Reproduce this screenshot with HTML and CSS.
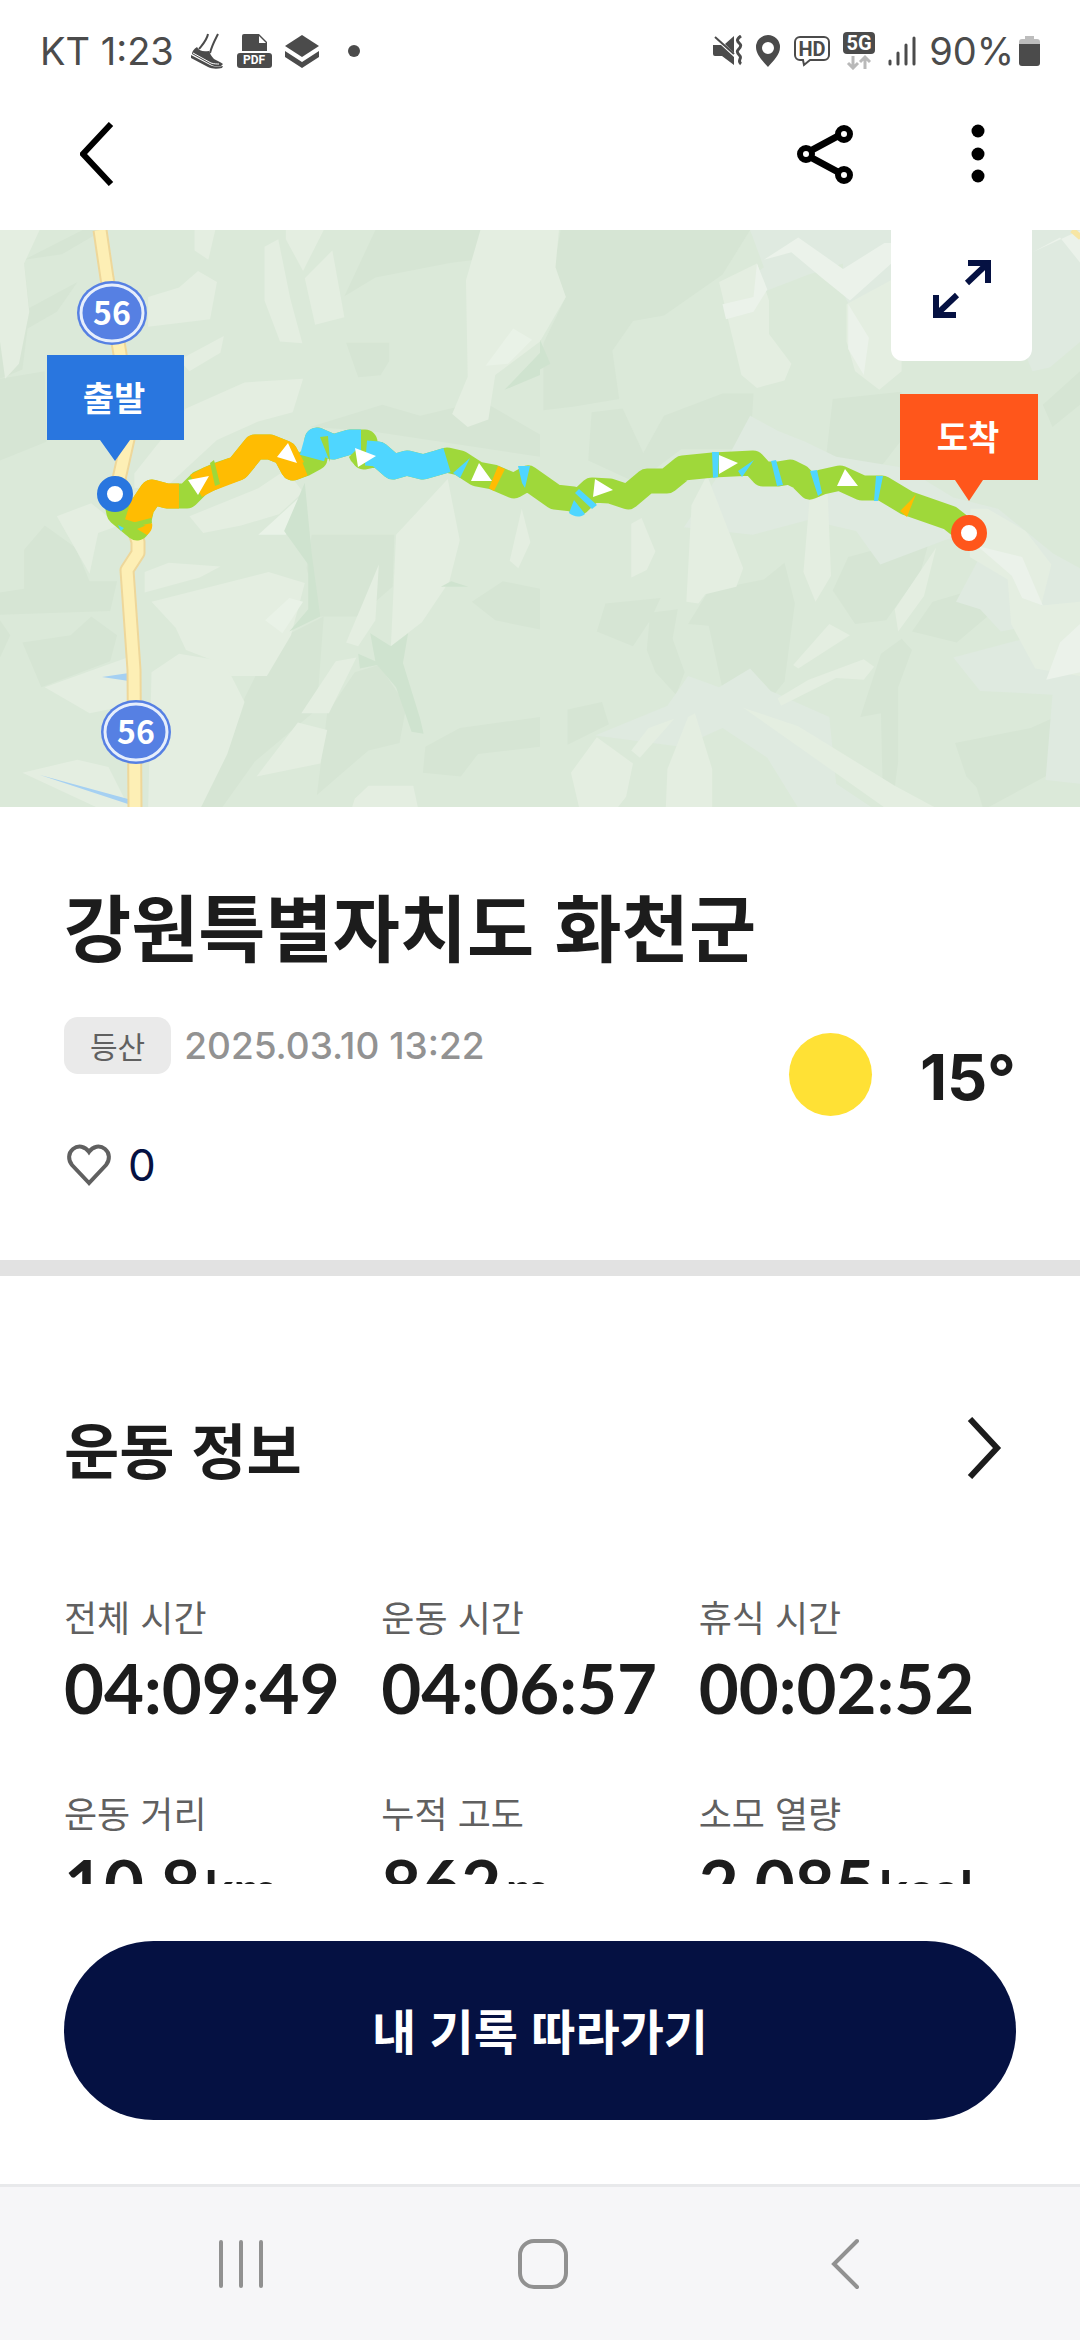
FILE: index.html
```html
<!DOCTYPE html>
<html lang="ko">
<head>
  <meta charset="UTF-8" />
  <meta name="viewport" content="width=device-width, initial-scale=1.0"/>
  <title>강원특별자치도 화천군</title>
  <link rel="stylesheet" href="styles.css">
</head>
<body>

  <!-- Status bar -->
  <div class="status-bar">
    <div class="status-left">
      <span class="status-text">KT 1:23</span>
      <svg width="33" height="36" viewBox="0 0 33 36" fill="#4b4b4b">
        <path d="M17 1c-1 6-5 10-9 15M27 1c-3 6-6 11-8 19" fill="none" stroke="#4b4b4b" stroke-width="2"/>
        <path d="M6 14c2 4 6 5 12 4 1 2 2 5 5 8 3 2 7 3 9 5l-2 2c-4 1-8 0-11-2L1 21c0-3 2-5 5-7z"/>
        <path d="M0 22l19 10c4 2 8 2 13 1l-1 2c-5 1-10 1-14-1L0 25z"/>
        <path d="M2 20l18 10c3 1 6 1 8 1" fill="none" stroke="#fff" stroke-width="1"/>
      </svg>
      <svg width="35" height="35" viewBox="0 0 35 35">
        <path d="M5 3a2 2 0 0 1 2-2h15l8 8v9H5z" fill="#4b4b4b"/>
        <path d="M22 3v7h7z" fill="#fff"/>
        <rect x="0" y="20" width="35" height="15" rx="3" fill="#4b4b4b"/>
        <text x="17" y="31" class="pdf-text">PDF</text>
      </svg>
      <svg width="34" height="34" viewBox="0 0 34 34" fill="#4b4b4b">
        <path d="M17 1l17 11-17 11L0 12z"/>
        <path d="M0 17l17 11 17-11v6L17 34 0 23z"/>
      </svg>
      <span class="status-dot"></span>
    </div>
    <div class="status-right">
      <svg width="30" height="31" viewBox="0 0 30 31">
        <path d="M0 10h8l13 12v8l-12-9H2a2 2 0 0 1-2-2zM21 1v17l-9-9z" fill="#4b4b4b"/>
        <path d="M2 2l19 17" stroke="#4b4b4b" stroke-width="2"/>
        <path d="M28 1c-6 4-3 6-1 8s0 4-2 6 0 4 2 6-3 5 1 8" fill="none" stroke="#4b4b4b" stroke-width="3"/>
      </svg>
      <svg width="25" height="32" viewBox="0 0 25 32">
        <path d="M12 0a12 12 0 0 1 12 12c0 8-7 14-12 20C7 26 0 20 0 12A12 12 0 0 1 12 0zm0 7a6 6 0 1 0 0 12 6 6 0 0 0 0-12z" fill="#4b4b4b"/>
      </svg>
      <svg width="36" height="32" viewBox="0 0 36 32">
        <path d="M6 2h24a5 5 0 0 1 5 5v13a5 5 0 0 1-5 5H16l-6 5-1-5H6a5 5 0 0 1-5-5V7a5 5 0 0 1 5-5z" fill="none" stroke="#4b4b4b" stroke-width="2"/>
        <text x="18" y="21" class="hd-text">HD</text>
      </svg>
      <svg width="32" height="38" viewBox="0 0 32 38">
        <rect x="0" y="0" width="32" height="22" rx="4" fill="#4b4b4b"/>
        <text x="16" y="18" class="net-text">5G</text>
        <path d="M10 24v12m-5-5l5 5 5-5M22 37V25m-5 5l5-5 5 5" fill="none" stroke="#b9b9b9" stroke-width="3"/>
      </svg>
      <svg width="28" height="32" viewBox="0 0 28 32" stroke="#4b4b4b" stroke-width="3" stroke-linecap="round">
        <path d="M2 26v3M10 18v11M18 10v19M26 3v26"/>
      </svg>
      <span class="status-text">90%</span>
      <svg class="battery" width="21" height="30" viewBox="0 0 21 30">
        <path d="M6 0h9v3h3a3 3 0 0 1 3 3v3H0V6a3 3 0 0 1 3-3h3z" fill="#bdbdbd"/>
        <path d="M0 8h21v19a3 3 0 0 1-3 3H3a3 3 0 0 1-3-3z" fill="#4b4b4b"/>
      </svg>
    </div>
  </div>

  <!-- App bar -->
  <header class="app-bar">
    <button class="icon-btn" aria-label="뒤로">
      <svg width="34" height="64" viewBox="0 0 34 64"><path d="M31 2L3 32l28 30" fill="none" stroke="#000" stroke-width="6"/></svg>
    </button>
    <div class="app-actions">
      <button class="icon-btn" aria-label="공유">
        <svg width="58" height="62" viewBox="0 0 58 62" fill="none" stroke="#000" stroke-width="6">
          <path d="M16 27l26-14M16 35l26 14" stroke-width="7"/>
          <circle cx="10" cy="31" r="6"/>
          <circle cx="48" cy="11" r="6"/>
          <circle cx="48" cy="52" r="6"/>
        </svg>
      </button>
      <button class="icon-btn" aria-label="더보기">
        <svg width="14" height="60" viewBox="0 0 14 60"><circle cx="7" cy="7" r="6.5"/><circle cx="7" cy="30" r="6.5"/><circle cx="7" cy="52" r="6.5"/></svg>
      </button>
    </div>
  </header>

  <main class="content">
    <!-- Map -->
    <div class="map">
      <svg class="map-svg" viewBox="0 0 1080 577">
        <rect width="1080" height="577" fill="#dbe9d9"/>

        <!-- terrain, west -->
        <g transform="scale(.3444 .3717)">
          <g fill="#d6e5d4">
            <path d="M70 80L240 0h60L180 65zM0 120l70-30 15 120 140-70-60 80-85 45-15 110L0 400z"/>
            <path d="M1090 0h480v60l-260 28-220 40-90 50zM1005 303h125v50l-25 38-65 5zM0 400l130-20 5 190L0 620z"/>
            <path d="M900 530l210-60 110 30 180-40 168 90v60l-500-70zM70 860l60-65 90 60 40 90 80 0-20 80-320 10 0-60 70-10zM0 1050l30 40L0 1150zM65 1110l140-20 60-50 75 50-20 70-200 70z"/>
            <path d="M905 820l240 0-5 140-100 80-110 0-40-130zM790 1110l150-70-20 250-180 140-100 130h-70l70-170zM1030 1190l70-20 80 110-20 100-90 20-150 120 30-220zM1370 1000l90-55 108 20v110l-130-25zM1235 1390l100-50 233-30v80l-180 20-50 60-110-10z"/>
          </g>
          <g fill="#e4eee1">
            <path d="M0 0h115L70 90l15 130-30 140-40 40L0 300zM565 0h60l-20 80-40-25zM768 45l40-20 35 160 35 120-65-5-45-110zM830 0h110l-60 110-50-85zM885 130l80-75 35 180-85 20zM430 180l90-25 55-45 55 30-20 100-180 20z"/>
            <path d="M520 350l130-65-10 45-90 50zM540 480l170-70 170-10-30 90-100 25-120 50-140 120-100 10 0-40zM1395 0h173v300l-130 90-20 120-60 20-45-35 45-100-5-260z"/>
            <path d="M550 770l200-75 80-50 50 60-70 60-110 30-110 20zM420 920l70-25 150 10-60 30-160 40zM440 1000l340-80 105 30-40 140-70 110-110 0-40-40-85-30-30-60z"/>
            <path d="M1150 820l150-150 35 165-30 110-80 110-90 65zM1055 1000l45-100-10 150-50 70-35-10zM440 1190l80-50 130 20 60 110-50 140-80 150H430zM875 1300l100-140 60-10-80 150zM745 1470l120-145 85 20-20 90zM1030 1530l40-35 130 0 15 65H1020zM1515 750l25 90-35 70-25-20z"/>
            <path d="M165 770l100-35 80 60-60 20-25 110zM130 1230l240-80 0 130-110 20zM65 1460l160-35 90 20 60 110-90 0z"/>
          </g>
          <g fill="#e9f2e7">
            <path d="M1410 365l80-100 55 30-70 65zM770 1050l70-60 40 10-60 85zM750 820l130-110v40l-50 70z"/>
          </g>
          <g fill="#cfe3cf">
            <path d="M825 810l60-130 20 190 25 170-90 40 55-60 0-120zM1075 1085l60 35 50-35-15 80 50 150 10 40-35-5-45-120-55-60-50 10-5-40 50 20zM1465 430l103-100v60zM1280 960l30-15 50 15z"/>
          </g>
        </g>

        <!-- terrain, east -->
        <g transform="translate(540) scale(.3444 .3717)">
          <g fill="#d6e5d4">
            <path d="M60 0h550l-80 120-170 110-90 15-60 80 20 130-130 20-90 10 0-180L75 180 40 100zM150 490l90-10 60 120 60-100 170-60 90 0-10 150-200 0-130 90-140-60z"/>
            <path d="M850 455l200-20v130l-50 60-60 60-110-70zM430 1060l60-90 160-30 60-45 30 110-30 210-35 40-80-60-65 40-40-170zM320 1030l80-10-15 80 35 90-25 60-60-60-25-60zM165 1080l25-75 160-15-30 60-50 70zM895 880l240-60-30 100-100 130-90 10-65-90z"/>
            <path d="M930 1310l60-170 60-40 30 30-40 100v200l-10 70h-35l-5-200zM1080 1080l60-80 220-60-10 60-140 110zM1205 1380l220-40 143-60v140l-280 140-20-60-30-30zM80 1290l100-20 20 60-120 55zM1460 470l108-90v90l-80 60z"/>
          </g>
          <g fill="#dfeae0">
            <path d="M610 0h960v300l-90 70-50 10-120-260-200-40-80 60-100 120-50-90 0-80-100 30-140 50-30-40 40-30zM610 500l80 40 80 30 90 40 200 30 140 80 130 30 160 120 78 40v130l-230 40-60-60-70-20 80-140-100-30-200 70-70-90-140-30-160 40-200-20 100-140z"/>
            <path d="M160 1360l210-80 60-80 90 30 90-50 60 60 170 70 20 180 130 80H760l-100-150-130-80-120 50zM1200 1150l368-90v430l-100-10 20-230-210-10z"/>
          </g>
          <g fill="#e4eee1">
            <path d="M0 0h55L45 100l30 80L0 300zM520 140l110-50 35 100 0 90 65 80-20 45-80 20-45-35zM890 200l160-80v260l-65 50-70-50-25-80zM265 790l30-15 40 90-25 50-45 20zM440 740l45-80 105 250-20 50-90 20-20 25-35-5zM785 700h50l10 230-45 70-35-80z"/>
            <path d="M1150 855l-35 130-75 95-10-60zM735 1170l105-110 60 30-150 90zM690 1260l90-50 160-55 30 20-30 35-80-5-160 75zM590 1285l160 50 280 160 130 65h-150zM90 1460l75-95 105 70-20 90-30 35H115zM370 1450l60-140 20-10 50 150v110H365zM265 1400l50-60 75-25-100 105z"/>
            <path d="M1250 750l50 0 110 60 75 90-30 110 113-10v200l-130-20-70-120-10-120-110-60z"/>
          </g>
          <g fill="#ebf2ea">
            <path d="M650 80l100-60 130 85 120-70 20 0v55l-120 100-80-60-90-70zM1430 60l140-60v90l-60-70zM530 200l90-20 10-90 30 70-40 60-80 20zM895 200l60 90-15 100-45-70zM1270 850l130 30 60 130-60-20-30-60zM1470 1210l40-100 58-50v130z"/>
          </g>
          <path d="M0 295l30 65-30 15z" fill="#cfe3cf"/>
          <path d="M1545 0l25 20" stroke="#f7e6a5" stroke-width="16"/>
        </g>

        <!-- streams -->
        <path d="M102 447l27-4v8zM40 545l88 24v5z" fill="#a5d0f2"/>

        <!-- road -->
        <g fill="none" stroke-linejoin="round">
          <path d="M100 0L107 48L120 124L130 200L119 249L138 312V323L127 340L134 440L135 577" stroke="#eed79a" stroke-width="15"/>
          <path d="M100 0L107 48L120 124L130 200L119 249L138 312V323L127 340L134 440L135 577" stroke="#fdefb5" stroke-width="11"/>
        </g>

        <!-- route 56 shields -->
        <g>
          <ellipse cx="112" cy="83" rx="35" ry="32" fill="#5680e3"/>
          <ellipse cx="112" cy="83" rx="31" ry="28" fill="none" stroke="#e6eefc" stroke-width="3"/>
          <text x="112" y="95" class="shield-text">56</text>
          <ellipse cx="136" cy="502" rx="35" ry="32" fill="#5680e3"/>
          <ellipse cx="136" cy="502" rx="31" ry="28" fill="none" stroke="#e6eefc" stroke-width="3"/>
          <text x="136" y="514" class="shield-text">56</text>
        </g>

        <!-- track, coloured by pace -->
        <g fill="none" stroke-width="25" stroke-linejoin="round">
          <path d="M115 264L119 283L137 298L142 277L152 262L167 266H187L200 253L220 244L238 238L255 217H270L285 223L293 238L304 234L315 228L317 210L333 217L350 212H365L364 227L378 224L393 237L407 233L423 237L437 233L447 230L460 233L477 244L493 247L514 256L528 248L555 267L573 269L578 273L592 260L610 261L628 267L647 251H667L683 238L713 235L753 233L763 244L778 244L790 242L800 247L810 257L822 252L840 248L862 258H882L907 273L950 288L969 303" stroke="#9fd83a" stroke-linecap="round"/>
          <path d="M137 293L142 277L152 262L167 266L179 266M196 256L209 249L238 238L255 217H270L285 223L293 238L303 234" stroke="#ffbc02"/>
          <path d="M312 228L317 210L333 217L350 212H361M366 223L378 224L393 237L407 233L423 237L437 233L447 230" stroke="#4fd6ff"/>
        </g>
        <path d="M124 295l27-7 1 5-24 5zM210 233l4-3 6 24-5 2zM320 207l8-1 2 26zM349 227l8-8v18l-6-6z" fill="#9fd83a"/>
        <path d="M137 299l15-6c1 5-1 9-5 12zM498 236l7 3-11 22-5-3zM911 270l5-6-9 23-7-6z" fill="#ffbc02"/>
        <path d="M118 295l6 3-3 3zM470 228l-10 20-7-5zM518 236h12l-5 22-3-5zM575 263l4-4 18 16-5 4zM574 270l11 14c-5 4-11 3-16-1zM712 222h7l-1 25-5 1zM754 230l-12 17-4-6zM771 231l5-1 7 25-6 1zM810 241l7-1 5 23-4 3zM876 246h7l-5 25h-4z" fill="#4fd6ff"/>
        <path d="M188 250l21-4-11 19zM277 227l11-14 9 20zM355 218l21 8-18 11zM479 233l13 18h-21zM595 249l18 11-20 7zM719 225l19 8-19 11zM845 239l13 17h-21z" fill="#fff"/>

        <!-- start -->
        <path d="M47 125h137v85h-54l-15 21-15-21H47z" fill="#2976df"/>
        <text x="114" y="181" class="pin-text">출발</text>
        <circle cx="115" cy="264" r="13" fill="#fff" stroke="#2976df" stroke-width="10"/>

        <!-- finish -->
        <path d="M900 164h138v86h-55l-14 21-14-21h-55z" fill="#ff561b"/>
        <text x="968" y="220" class="pin-text">도착</text>
        <circle cx="969" cy="303" r="13" fill="#fff" stroke="#ff561b" stroke-width="10"/>
      </svg>

      <button class="expand-btn" aria-label="지도 크게 보기">
        <svg width="60" height="60" viewBox="0 0 60 60" fill="none" stroke="#051142" stroke-width="6">
          <path d="M36 4h20v20M55 5L35 24M24 56H4V36M5 55l20-19"/>
        </svg>
      </button>
    </div>

    <!-- Course summary -->
    <section class="summary">
      <h1>강원특별자치도 화천군</h1>
      <div class="summary-row">
        <div class="summary-info">
          <div class="meta">
            <span class="tag">등산</span>
            <time class="date" datetime="2025-03-10T13:22">2025.03.10 13:22</time>
          </div>
          <button class="like-btn" aria-label="좋아요 0">
            <svg width="50" height="46" viewBox="0 0 50 46"><path d="M25 41L8 23C4 18 4 11 9 7s12-3 16 3c4-6 11-7 16-3s5 11 1 16z" fill="none" stroke="#606060" stroke-width="4"/></svg>
            <span>0</span>
          </button>
        </div>
        <div class="weather">
          <span class="sun"></span>
          <span class="temp">15°</span>
        </div>
      </div>
    </section>

    <!-- Workout info -->
    <section class="workout">
      <div class="section-head">
        <h2>운동 정보</h2>
        <button class="icon-btn" aria-label="운동 정보 더보기">
          <svg width="36" height="62" viewBox="0 0 36 62"><path d="M4 2l27 29L4 60" fill="none" stroke="#1c1c1c" stroke-width="6"/></svg>
        </button>
      </div>
      <dl class="stats">
        <div><dt>전체 시간</dt><dd>04:09:49</dd></div>
        <div><dt>운동 시간</dt><dd>04:06:57</dd></div>
        <div><dt>휴식 시간</dt><dd>00:02:52</dd></div>
        <div><dt>운동 거리</dt><dd>10.8<span class="unit">km</span></dd></div>
        <div><dt>누적 고도</dt><dd>862<span class="unit">m</span></dd></div>
        <div><dt>소모 열량</dt><dd>2,085<span class="unit">kcal</span></dd></div>
      </dl>
    </section>
  </main>

  <div class="bottom-action">
    <button class="follow-btn">내 기록 따라가기</button>
  </div>

  <!-- System navigation -->
  <nav class="nav-bar">
    <button class="icon-btn" aria-label="최근 앱">
      <svg width="48" height="50" viewBox="0 0 48 50" stroke="#919191" stroke-width="4" stroke-linecap="round"><path d="M4 3v44M24 3v44M44 3v44"/></svg>
    </button>
    <button class="icon-btn" aria-label="홈">
      <svg width="50" height="50" viewBox="0 0 50 50"><rect x="2" y="2" width="46" height="46" rx="14" fill="none" stroke="#919191" stroke-width="4"/></svg>
    </button>
    <button class="icon-btn" aria-label="이전">
      <svg width="30" height="52" viewBox="0 0 30 52"><path d="M27 3L4 26l23 23" fill="none" stroke="#919191" stroke-width="4" stroke-linecap="round"/></svg>
    </button>
  </nav>

</body>
</html>
```
FILE: styles.css
```css
* {
  box-sizing: border-box;
}

body {
  margin: 0;
  height: 100vh;
  display: flex;
  flex-direction: column;
  font-family: 'Noto Sans CJK KR', sans-serif;
  color: #1c1c1c;
  background: #fff;
}

h1, h2, dl, dd {
  margin: 0;
}

svg {
  display: block;
}

button {
  padding: 0;
  border: none;
  background: none;
  font-family: inherit;
  cursor: pointer;
}

/* Status bar */
.status-bar {
  display: flex;
  justify-content: space-between;
  align-items: center;
  height: 77px;
  padding: 24px 40px 0 40px;
}

.status-left,
.status-right {
  display: flex;
  align-items: center;
  gap: 13px;
}

.status-text {
  font-family: Inter, sans-serif;
  font-size: 38px;
  line-height: 52px;
  color: #4b4b4b;
}

.status-left .status-text {
  margin-right: 4px;
}

.status-dot {
  width: 12px;
  height: 12px;
  margin-left: 16px;
  border-radius: 50%;
  background: #4b4b4b;
}

.battery {
  margin-left: -8px;
}

.pdf-text,
.hd-text,
.net-text {
  text-anchor: middle;
  font-family: Roboto, sans-serif;
  font-weight: 700;
  fill: #fff;
}

.pdf-text {
  font-size: 12px;
}

.hd-text {
  font-size: 20px;
  fill: #4b4b4b;
}

.net-text {
  font-size: 20px;
}

/* App bar */
.app-bar {
  display: flex;
  justify-content: space-between;
  align-items: center;
  height: 153px;
  padding: 0 95px 0 80px;
}

.app-actions {
  display: flex;
  align-items: center;
  gap: 117px;
}

.content {
  flex: 1;
  min-height: 0;
  overflow-y: auto;
  scrollbar-width: none;
}

/* Map */
.map {
  position: relative;
}

.map-svg {
  width: 100%;
  height: auto;
}

.shield-text,
.pin-text {
  text-anchor: middle;
  font-weight: 700;
  fill: #fff;
}

.shield-text {
  font-size: 32px;
}

.pin-text {
  font-size: 34px;
}

.expand-btn {
  position: absolute;
  top: 0;
  right: 48px;
  display: flex;
  justify-content: center;
  align-items: center;
  width: 141px;
  height: 131px;
  padding-bottom: 14px;
  border-radius: 0 0 12px 12px;
  background: #fff;
}

/* Summary */
.summary {
  padding: 65px 64px 66px;
  border-bottom: 16px solid #e2e2e2;
}

h1 {
  margin-bottom: 41px;
  font-size: 73px;
  line-height: 104px;
}

.summary-row {
  display: flex;
  justify-content: space-between;
}

.meta {
  display: flex;
  align-items: center;
  gap: 13px;
  margin-bottom: 62px;
}

.tag {
  padding: 0 26px;
  border-radius: 14px;
  background: #eaeaea;
  font-size: 30px;
  line-height: 57px;
  color: #606060;
}

.date {
  font-family: Inter, sans-serif;
  font-size: 37px;
  font-weight: 500;
  color: #929292;
}

.like-btn {
  display: flex;
  align-items: center;
  gap: 14px;
  font-family: Inter, sans-serif;
  font-size: 44px;
  line-height: 58px;
  color: #051142;
}

.weather {
  display: flex;
  align-items: center;
  align-self: flex-start;
  gap: 48px;
  padding-top: 16px;
}

.sun {
  width: 83px;
  height: 83px;
  border-radius: 50%;
  background: #ffe135;
}

.temp {
  padding-top: 4px;
  font-family: Inter, sans-serif;
  font-size: 63px;
  font-weight: 700;
}

/* Workout info */
.workout {
  padding: 128px 64px 64px;
}

.section-head {
  display: flex;
  justify-content: space-between;
  align-items: center;
  margin-bottom: 98px;
  padding-right: 14px;
}

h2 {
  font-size: 60px;
  line-height: 88px;
}

.stats {
  display: grid;
  grid-template-columns: repeat(3, 1fr);
  row-gap: 52px;
}

dt {
  font-size: 36px;
  line-height: 52px;
  color: #606060;
}

dd {
  font-family: Lato, sans-serif;
  font-size: 69px;
  font-weight: 700;
  line-height: 92px;
  white-space: nowrap;
}

.unit {
  margin-left: 4px;
  font-size: 54px;
}

/* Bottom button */
.bottom-action {
  padding: 57px 64px 64px;
}

.follow-btn {
  width: 100%;
  height: 179px;
  padding-bottom: 4px;
  border-radius: 90px;
  background: #051142;
  font-size: 48px;
  font-weight: 700;
  color: #fff;
}

/* System navigation */
.nav-bar {
  display: grid;
  grid-template-columns: repeat(3, 1fr);
  justify-items: center;
  align-items: center;
  height: 156px;
  padding: 0 84px 0 90px;
  border-top: 3px solid #e8e9eb;
  background: #f6f6f8;
}
```
